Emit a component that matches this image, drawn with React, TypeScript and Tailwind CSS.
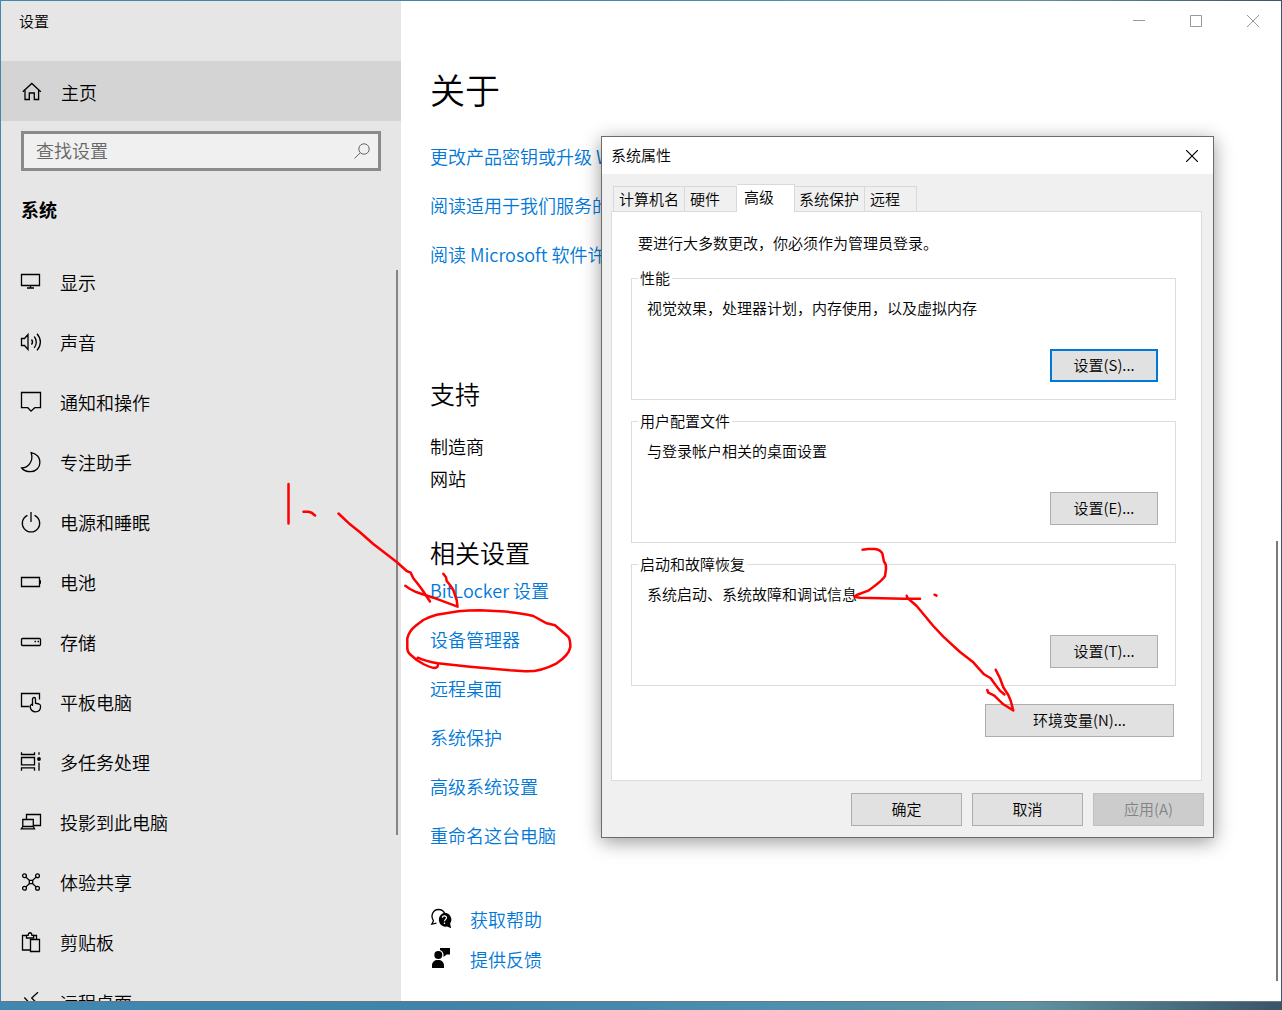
import React, { useState } from 'react';
import clsx from 'clsx';

const Icon: React.FC<{ children: React.ReactNode }> = ({ children }) => (
  <svg
    viewBox="0 0 20 20"
    className="h-5 w-5 shrink-0 overflow-visible"
    fill="none"
    stroke="currentColor"
    strokeWidth="1.3"
    aria-hidden="true"
  >
    {children}
  </svg>
);

const HomeIcon = () => (
  <Icon>
    <path d="M1.800 9.800 10.800 1.500l9 8.300M4 8.200v9.300h4.300v-6.500h5v6.500h4.300V8.200" />
  </Icon>
);

const navItems = [
  {
    label: '显示',
    icon: <path d="M.5 1.5h18v11H.5zM9.5 12.5v2.5M6 15h7" />,
  },
  {
    label: '声音',
    icon: (
      <path d="M.5 5.5h3L7 1.5v15l-3.500-4H.5zM10.500 6.500c1.300 1.600 1.300 3.600 0 5.200M13.200 3.500c2.800 3.300 2.800 8 0 11.300M16 .8c4.500 5 4.500 11.600 0 16.600" />
    ),
  },
  {
    label: '通知和操作',
    icon: <path d="M.5-.5h19v15.200h-5.700L10 18.200l-3.200-3.500H.5z" />,
  },
  {
    label: '专注助手',
    icon: <path d="M10.200-.3c5.600 1.400 8.700 5.200 8.700 9.800 0 5.100-4 9.200-9.200 9.200-3.800 0-7-1-9-3.700C7 14.800 12.800 8.500 10.200-.3z" />,
  },
  {
    label: '电源和睡眠',
    icon: <path d="M10-1V9M6.500 2.300a8.700 8.700 0 1 0 7 0" />,
  },
  {
    label: '电池',
    icon: (
      <>
        <path d="M.5 4.500h18v9H.5z" />
        <path d="M19 7.200h1v3.600h-1z" fill="currentColor" stroke="none" />
      </>
    ),
  },
  {
    label: '存储',
    icon: (
      <>
        <rect x=".5" y="5.500" width="19" height="7" rx="1" />
        <path d="M13.500 8.500h1.500M16.500 8.500H18" />
      </>
    ),
  },
  {
    label: '平板电脑',
    icon: (
      <>
        <path d="M8.500 13.500h-8V.5h18v6" />
        <path d="M11.500 13V6c0-2 3-2 3 0v4.200l3.500.8c1 .3 1.500.9 1.500 1.800v1.200c0 2.900-2 4.800-5 4.800s-4.600-1.800-5.200-4.300c-.3-1.600.5-3.300 2.200-3.300" />
      </>
    ),
  },
  {
    label: '多任务处理',
    icon: (
      <>
        <path d="M.5-.8v2.300h13V-.8M.5 4.500h13v7.300H.5zM.5 17.800v-3h13v3M18-.8v2.600M18 9.500v8.300" />
        <circle cx="18" cy="6" r="1.900" fill="currentColor" stroke="none" />
      </>
    ),
  },
  {
    label: '投影到此电脑',
    icon: <path d="M5.500 6V1.500h14v11h-7M1.800 6.500h10.500v7H1.800zM1.800 13.500l-1.500 2.300h13.200l-1.200-2.300" />,
  },
  {
    label: '体验共享',
    icon: (
      <>
        <circle cx="3.500" cy="2.700" r="1.900" />
        <circle cx="16.500" cy="2.700" r="1.900" />
        <circle cx="3.500" cy="15.300" r="1.900" />
        <circle cx="16.500" cy="15.300" r="1.900" />
        <path d="M8.300 7.300h3.400v3.400H8.300zM4.900 4.100l3.400 3.200M15.100 4.100l-3.400 3.200M4.900 13.900l3.400-3.200M15.100 13.900l-3.400-3.200" />
      </>
    ),
  },
  {
    label: '剪贴板',
    icon: (
      <>
        <path d="M9 17H1.500V2.500h4M12 2.500h3.500v4" />
        <path d="M5.500 5V2.300h1.700c.3-3.400 3.400-3.400 3.700 0h1.700V5z" />
        <path d="M9.500 6.500h9v12h-9z" />
      </>
    ),
  },
  {
    label: '远程桌面',
    icon: <path d="M3.300 4.500 9 10.500l-5.700 6M17-.8 10.700 5l6 6" />,
  },
];

const licenseLinks = [
  '更改产品密钥或升级 Windows',
  '阅读适用于我们服务的协议',
  '阅读 Microsoft 软件许可条款',
];

const relatedLinks = ['BitLocker 设置', '设备管理器', '远程桌面', '系统保护', '高级系统设置', '重命名这台电脑'];

const tabs = [
  { label: '计算机名', size: 'w-[72px] pl-[5px]' },
  { label: '硬件', size: 'w-[52px] pl-[5px]' },
  { label: '高级', size: 'w-[58px] pl-[7px]' },
  { label: '系统保护', size: 'w-[70px] pl-[4px]' },
  { label: '远程', size: 'w-[52px] pl-[5px]' },
];

const groups = [
  { title: '性能', text: '视觉效果，处理器计划，内存使用，以及虚拟内存', button: '设置(S)...', focused: true },
  { title: '用户配置文件', text: '与登录帐户相关的桌面设置', button: '设置(E)...', focused: false },
  { title: '启动和故障恢复', text: '系统启动、系统故障和调试信息', button: '设置(T)...', focused: false },
];

const DialogButton: React.FC<{
  children: React.ReactNode;
  className: string;
  focused?: boolean;
  disabled?: boolean;
}> = ({ children, className, focused, disabled }) => (
  <button
    type="button"
    disabled={disabled}
    className={clsx(
      'h-[33px] pb-0.5',
      className,
      focused && 'border-2 border-[#0078d7] bg-[#e1e1e1]',
      disabled && 'border border-[#bfbfbf] bg-[#cccccc] text-[#838383]',
      !focused && !disabled && 'border border-[#adadad] bg-[#e1e1e1]'
    )}
  >
    {children}
  </button>
);

const Sidebar = () => (
  <aside className="flex w-[400px] shrink-0 flex-col bg-[#e6e6e6]">
    <div className="flex h-[60px] shrink-0 pt-2.5 pl-[18px] text-[15px] leading-5">设置</div>
    <a href="#home" className="flex h-[60px] shrink-0 items-center gap-5 bg-[#d4d4d4] pt-0.5 pl-5">
      <HomeIcon />
      <span>主页</span>
    </a>
    <div className="mx-5 mt-2.5 flex h-10 shrink-0 items-center border-3 border-[#8a8a8a] bg-[#f0f0f0] pr-2 pl-[12px]">
      <input
        type="text"
        aria-label="查找设置"
        placeholder="查找设置"
        className="min-w-0 flex-1 bg-transparent pb-0.5 outline-none placeholder:text-[#666666]"
      />
      <svg viewBox="0 0 16 16" className="h-4 w-4" fill="none" stroke="#666666" aria-hidden="true">
        <circle cx="10" cy="6" r="5.200" />
        <path d="M6.300 9.700.5 15.500" />
      </svg>
    </div>
    <h2 className="mt-[22px] shrink-0 pl-5 font-bold leading-8">系统</h2>
    <div className="relative mt-7 min-h-0 flex-1 overflow-hidden">
      <nav>
        {navItems.map((item) => (
          <a key={item.label} href="#nav" className="flex h-[60px] items-center gap-[19px] pl-5">
            <Icon>{item.icon}</Icon>
            <span className="pb-0.5">{item.label}</span>
          </a>
        ))}
      </nav>
      <div className="absolute top-[17px] right-[3px] h-[565px] w-[2px] bg-[#858585]" />
    </div>
  </aside>
);

const AboutPage = () => (
  <main className="relative flex min-w-0 flex-1 flex-col bg-white">
    <div className="flex h-10 justify-end text-[#999999]">
      <button type="button" aria-label="最小化" className="flex w-[57px] items-center justify-center">
        <svg viewBox="0 0 12 12" className="h-3 w-3" stroke="currentColor">
          <path d="M0 5.500H12" />
        </svg>
      </button>
      <button type="button" aria-label="最大化" className="flex w-[57px] items-center justify-center">
        <svg viewBox="0 0 12 12" className="h-3 w-3" fill="none" stroke="currentColor">
          <path d="M.5 .5h11v11H.5z" />
        </svg>
      </button>
      <button type="button" aria-label="关闭" className="flex w-[57px] items-center justify-center">
        <svg viewBox="0 0 12 12" className="h-3 w-3" stroke="currentColor">
          <path d="M0 0l12 12M12 0L0 12" />
        </svg>
      </button>
    </div>
    <div className="pl-[29px]">
      <h1 className="mt-6 text-[35px] leading-[48px]">关于</h1>
      <div className="mt-[19px] flex flex-col items-start text-[#0078d7]">
        {licenseLinks.map((link) => (
          <a key={link} href="#license" className="leading-[49px] whitespace-nowrap">
            {link}
          </a>
        ))}
      </div>
      <h2 className="mt-[100px] text-[25px] leading-7">支持</h2>
      <div className="mt-[23px] leading-8">
        <p>制造商</p>
        <p>网站</p>
      </div>
      <h2 className="mt-11 text-[25px] leading-7">相关设置</h2>
      <div className="flex flex-col items-start text-[#0078d7]">
        {relatedLinks.map((link) => (
          <a key={link} href="#related" className="leading-[49px]">
            {link}
          </a>
        ))}
      </div>
      <div className="mt-10 flex flex-col items-start pl-px">
        <a href="#help" className="flex h-10 items-center gap-[19px]">
          <svg viewBox="0 0 20 20" className="h-5 w-5 overflow-visible" aria-hidden="true">
            <path
              d="M2.600 10.800C-1 6 2-.5 7.500-.5c3 0 5 1.500 6 3.600M2.600 10.500.8 14.200l4.700-1"
              fill="none"
              stroke="#000"
              strokeWidth="1.300"
            />
            <path d="M13.500 2.800a6.800 6.800 0 0 1 5.600 10.700l1 4.800-4-1.700A6.800 6.800 0 1 1 13.500 2.800z" />
            <path
              d="M11.300 7.800c.2-2.500 4.300-2.400 4.200 0 0 1.600-2 1.600-2 3.500M13.500 12.500V14"
              fill="none"
              stroke="#fff"
              strokeWidth="1.300"
            />
          </svg>
          <span className="pb-0.5 text-[#0078d7]">获取帮助</span>
        </a>
        <a href="#feedback" className="flex h-10 items-center gap-[19px]">
          <svg viewBox="0 0 20 20" className="h-5 w-5 overflow-visible" aria-hidden="true">
            <circle cx="7.300" cy="5" r="4" />
            <path d="M1 18v-2.500C1 12 3.500 10 7 10s6 2 6 5.500V18zM9-2h10v6.500h-3.300L12.500 7V4.500C12.300 2.300 11 .8 9 0z" />
          </svg>
          <span className="pb-0.5 text-[#0078d7]">提供反馈</span>
        </a>
      </div>
    </div>
    <div className="absolute right-[3px] bottom-5 h-[440px] w-[2px] bg-[#7a7a7a]" />
  </main>
);

const SystemPropertiesDialog = () => {
  const [activeTab, setActiveTab] = useState('高级');

  return (
    <div
      role="dialog"
      aria-label="系统属性"
      className="absolute top-[136px] left-[601px] w-[613px] border border-[#6b6b6b] bg-[#f0f0f0] text-[15px] leading-5 shadow-[0_4px_18px_rgba(0,0,0,0.4)]"
    >
      <div className="flex h-[37px] items-center justify-between bg-white pr-[15px] pl-[9px]">
        <span className="pb-0.5">系统属性</span>
        <button type="button" aria-label="关闭">
          <svg viewBox="0 0 12 12" className="h-3 w-3" stroke="#000" strokeWidth="1.200">
            <path d="M0 0l12 12M12 0L0 12" />
          </svg>
        </button>
      </div>
      <div role="tablist" className="relative -mb-px flex items-end pt-2.5 pl-[11px]">
        {tabs.map((tab) => (
          <button
            key={tab.label}
            type="button"
            role="tab"
            aria-selected={tab.label === activeTab}
            onClick={() => setActiveTab(tab.label)}
            className={clsx(
              'border-t border-r border-[#d9d9d9] text-left whitespace-nowrap first:border-l',
              tab.size,
              tab.label === activeTab ? 'h-7 bg-white pb-1' : 'h-[26px] border-b bg-[#f0f0f0]'
            )}
          >
            {tab.label}
          </button>
        ))}
      </div>
      <div className="mr-[11px] ml-[9px] flex flex-col border border-[#dcdcdc] bg-white pt-[21px] pr-[25px] pb-[43px] pl-[19px]">
        <p className="pl-[7px]">要进行大多数更改，你必须作为管理员登录。</p>
        <div className="mt-[15px] flex flex-col gap-[11px]">
          {groups.map((group) => (
            <fieldset key={group.title} className="border border-[#dcdcdc] pr-[17px] pb-[17px] pl-[15px]">
              <legend className="-ml-[9px] px-0.5">{group.title}</legend>
              <p className="pt-2.5">{group.text}</p>
              <div className="mt-[31px] flex justify-end">
                <DialogButton className="w-[108px]" focused={group.focused}>
                  {group.button}
                </DialogButton>
              </div>
            </fieldset>
          ))}
        </div>
        <DialogButton className="mt-[18px] mr-0.5 w-[189px] self-end">环境变量(N)...</DialogButton>
      </div>
      <div className="flex justify-end gap-2.5 pt-3 pr-[9px] pb-[11px]">
        <DialogButton className="w-[111px]">确定</DialogButton>
        <DialogButton className="w-[111px]">取消</DialogButton>
        <DialogButton className="w-[111px]" disabled>
          应用(A)
        </DialogButton>
      </div>
    </div>
  );
};

// Freehand red pen marks over both windows
const PenMarks = () => (
  <svg
    viewBox="0 0 1282 1010"
    className="pointer-events-none absolute top-0 left-0 h-[1010px] w-[1282px]"
    fill="none"
    stroke="#ff0000"
    strokeWidth="2.500"
    strokeLinecap="round"
    strokeLinejoin="round"
    aria-hidden="true"
  >
    <path d="M288.500 484V523.500M303.500 511.700L308.500 511.700L311.700 512.700L315 515.500" />
    <path d="M338.500 513.500L350 524.300L360 532.300L373.300 544L396.700 562L406.700 571L410.700 572.700L413.300 578.300L417.300 583.300L421.700 589L430 601.500" />
    <path d="M405.300 585.700L410 589L416.700 592.300L433.300 597.700L457.500 606.700L456.700 600L453.300 590L450 585L446.700 581L446 577.300L443.300 573.700" />
    <path d="M417.700 657.700Q426 661.500 437.700 663.300Q438.500 667.500 435 668Q430 667.500 423.300 664L416.700 660L410 654.300Q407.300 652 407.300 648V638.300Q409 631 416 625.500L423.300 620Q430 616.500 436.700 614.700L458.300 611.300Q468 610.300 480 610.300L500 611.300Q520 612.500 533.300 616L546.700 623.300L555 625.300L568.300 636.700Q570.500 640 570.300 647Q569 655 556.700 663.300Q540 672 525 671.300L510 670.300L470 666.700L437.700 663.300" />
    <path d="M862.500 549.700L868 549H875Q880 549.500 882.300 553.300L884 561.700Q886.500 564 886 569L885 576Q883 580 868.300 590.700L856.700 595L854.300 596.700L860 597.700L903.300 598.700H920" />
    <path d="M934.500 594.700L936.500 595.700" />
    <path d="M906.700 595.700L907.500 598L916.700 606L933.300 626L943.300 636.700L960 652L973.300 662.300L984 674.300L990.700 678.300L995 684.300L1000 690.700L1004.500 694.500" />
    <path d="M995.700 669.700L1000 678.300L1003.300 687.300L1008.300 695L1010.700 700.700L1013.300 710.500L1003.300 704.300L994.300 695.700L988.300 692.700L987.300 690" />
  </svg>
);

export default function App() {
  return (
    <div className="relative h-screen overflow-hidden bg-[linear-gradient(to_right,#4287b0,#3f84a8_35%,#4c8fae_60%,#5f93a3_80%,#3a5468)] px-px pt-px pb-2 font-['Noto_Sans_CJK_SC',sans-serif] text-[18px] leading-6 font-[350] text-black">
      <div className="flex h-full border-b border-[#6b7780]">
        <Sidebar />
        <AboutPage />
      </div>
      <SystemPropertiesDialog />
      <PenMarks />
    </div>
  );
}
